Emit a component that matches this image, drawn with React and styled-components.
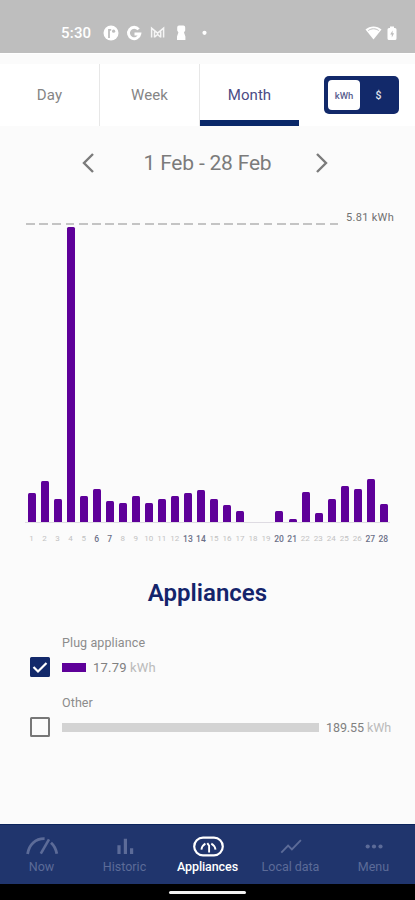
import React from 'react';
import styled, { createGlobalStyle } from 'styled-components';

const GlobalStyle = createGlobalStyle`
  *, *::before, *::after { box-sizing: border-box; }
  body { margin: 0; background: #fbfbfb; font-family: Roboto, "Noto Sans", sans-serif; }
`;

const Screen = styled.div`
  width: 415px;
  height: 900px;
  display: flex;
  flex-direction: column;
  overflow: hidden;
  background: #fbfbfb;
`;

const StatusBar = styled.header`
  flex: none;
  height: 53px;
  padding: 13px 18px 0 61px;
  display: flex;
  align-items: center;
  background: #bebebe;
  color: #fff;
`;

const Clock = styled.span`
  width: 42px;
  font-size: 15px;
  font-weight: 500;
  letter-spacing: 0.2px;
`;

const StatusIcons = styled.div`
  display: flex;
  align-items: center;
`;

const SystemIcons = styled(StatusIcons)`
  margin-left: auto;
  gap: 5px;
`;

const TopBar = styled.div`
  flex: none;
  height: 75px;
  padding-top: 10px;
  border-top: 1px solid #fff;
  display: flex;
`;

const Tabs = styled.nav`
  display: flex;
  width: 300px;
  height: 62px;
`;

const Tab = styled.button`
  display: flex;
  flex-direction: column;
  width: 100px;
  padding: 0;
  border: 0;
  border-right: 1px solid ${(p) => (p.$active ? '#fff' : '#e7e7e7')};
  background: #fff;
  color: ${(p) => (p.$active ? '#4b4b85' : '#858585')};
  font: 400 15px/62px Roboto, sans-serif;
  letter-spacing: ${(p) => p.$spacing || 0.05}px;
  text-align: center;
`;

const TabLabel = styled.span`
  width: 100%;
  height: 56px;
`;

const TabUnderline = styled.span`
  width: 100%;
  height: 6px;
  background: #0a2869;
`;

const SwitchArea = styled.div`
  flex: 1;
  height: 62px;
  padding-left: 24px;
  display: flex;
  align-items: center;
  background: #fff;
`;

const UnitSwitch = styled.div`
  width: 75px;
  height: 38px;
  padding: 4px;
  display: flex;
  border-radius: 5px;
  background: #12296a;
`;

const UnitOption = styled.span`
  width: ${(p) => (p.$active ? '32px' : '37px')};
  flex: none;
  height: 30px;
  display: flex;
  align-items: center;
  justify-content: center;
  border-radius: 4px;
  background: ${(p) => (p.$active ? '#fff' : 'transparent')};
  color: ${(p) => (p.$active ? '#5a618f' : '#e1e4ee')};
  font-size: ${(p) => (p.$active ? '9.5px' : '10.5px')};
  font-weight: 500;
`;

const Period = styled.div`
  flex: none;
  height: 70px;
  padding: 0 83px 0 78px;
  display: flex;
  align-items: center;
  justify-content: space-between;
  color: #7b7b7b;
`;

const PeriodLabel = styled.span`
  padding-left: 5px;
  font-size: 21px;
  letter-spacing: -0.2px;
  white-space: nowrap;
`;

const ArrowButton = styled.button`
  width: 20px;
  height: 24px;
  padding: 0;
  border: 0;
  background: none;
  color: #7b7b7b;
  display: grid;
  place-items: center;
`;

const Chart = styled.section`
  flex: none;
  height: 374px;
  padding: 13px 21px 0 25px;
`;

const MaxLine = styled.div`
  height: 15px;
  display: flex;
  justify-content: space-between;
`;

const Dashes = styled.div`
  flex: none;
  width: 313px;
  height: 2px;
  margin: 12px 0 0 0.5px;
  background: repeating-linear-gradient(90deg, #c4c4c4 0 8.7px, transparent 8.7px 13.2px);
`;

const MaxLabel = styled.span`
  font-size: 11px;
  line-height: 14px;
  letter-spacing: 0.3px;
  white-space: nowrap;
  color: #707070;
`;

const Plot = styled.div`
  width: 365px;
  height: 297px;
  display: grid;
  grid-template-columns: repeat(28, 1fr);
  align-items: end;
  border-bottom: 1px solid #dedbe2;
`;

const Bar = styled.div`
  width: 8px;
  margin-left: 2.8px;
  border-radius: 1.5px 1.5px 0 0;
  background: #5e0099;
`;

const DayLabels = styled.div`
  width: 365px;
  margin-top: 10px;
  display: grid;
  grid-template-columns: repeat(28, 13.035px);
`;

const DayLabel = styled.span`
  display: flex;
  justify-content: center;
  font-size: ${(p) => (p.$weekend ? 8.5 : 8)}px;
  line-height: 12px;
  font-weight: ${(p) => (p.$weekend ? 500 : 400)};
  color: ${(p) => (p.$weekend ? '#6c7088' : '#c2c2c2')};
`;

const Title = styled.h1`
  flex: none;
  height: 42px;
  margin: 0;
  text-align: center;
  color: #14246b;
  font-size: 24px;
  line-height: 42px;
  font-weight: 600;
`;

const ApplianceList = styled.section`
  flex: 1;
  padding: 20px 20px 0 30px;
`;

const Appliance = styled.div`
  height: 60px;
  display: grid;
  grid-template-columns: 32px 1fr;
  grid-template-rows: 17px 32px;
  align-items: center;
`;

const ApplianceName = styled.label`
  grid-column: 2;
  font-size: 12.5px;
  letter-spacing: 0.1px;
  color: #8c8c8c;
`;

const CheckBox = styled.span`
  width: 20px;
  height: 20px;
  display: grid;
  place-items: center;
  border: 2px solid ${(p) => (p.$checked ? '#12296a' : '#777')};
  border-radius: 1.5px;
  background: ${(p) => (p.$checked ? '#12296a' : 'transparent')};
`;

const Usage = styled.div`
  display: flex;
  align-items: center;
  gap: 7px;
`;

const UsageBar = styled.div`
  flex: none;
  width: ${(p) => p.$width}px;
  height: 9px;
  background: ${(p) => p.$color};
`;

const Amount = styled.span`
  font-size: ${(p) => (p.$compact ? 12.5 : 13)}px;
  letter-spacing: ${(p) => (p.$compact ? -0.08 : 0.2)}px;
  white-space: nowrap;
  color: #808080;
`;

const Unit = styled.span`
  color: #bababa;
`;

const BottomNav = styled.nav`
  flex: none;
  height: 60px;
  display: grid;
  grid-template-columns: repeat(5, 1fr);
  border-top: 1px solid #0c245c;
  background: #20356d;
`;

const NavItem = styled.button`
  padding: 8px 0 0;
  border: 0;
  background: none;
  display: flex;
  flex-direction: column;
  align-items: center;
  color: ${(p) => (p.$active ? '#fff' : '#5c6b98')};
  font: ${(p) => (p.$active ? 500 : 400)} 12.5px/16px Roboto, sans-serif;
  letter-spacing: ${(p) => p.$spacing}px;
  white-space: nowrap;
`;

const NavIcon = styled.svg`
  display: block;
  flex: none;
  width: 36px;
  height: 26px;
  fill: none;
  stroke: currentColor;
`;

const GestureBar = styled.footer`
  flex: none;
  height: 16px;
  padding-top: 7px;
  display: flex;
  justify-content: center;
  background: #000;
`;

const GestureHandle = styled.span`
  width: 77px;
  height: 3px;
  border-radius: 2px;
  background: #f2f2f2;
`;

const days = [
  29.5, 41.5, 23.5, 295, 26.5, 33, 21, 19, 26.5, 19, 23.5, 26.5, 29.5, 32,
  23.5, 17.5, 11, 0, 0, 11, 3.5, 30.5, 9.5, 23.5, 36.5, 33, 43.5, 18.5,
];
const weekends = [6, 7, 13, 14, 20, 21, 27, 28];

const navItems = [
  {
    label: 'Now',
    spacing: 0.1,
    icon: (
      <g strokeWidth="2.8">
        <path d="M3.6 20.5C5 11 11.5 5 20.6 5.2" />
        <path d="M16.8 20.2 25 5.8" strokeWidth="2.6" />
        <path d="M27 9.3C30 12 32 15.8 32.8 20.3" />
      </g>
    ),
  },
  {
    label: 'Historic',
    spacing: 0.03,
    icon: <path strokeWidth="3.2" d="M12 20.5v-8.7M18.4 20.5V5.3M24.6 20.5v-5.7" />,
  },
  {
    label: 'Appliances',
    spacing: -0.1,
    active: true,
    icon: (
      <>
        <rect x="4.2" y="4.2" width="28.6" height="17.6" rx="8.8" strokeWidth="2.2" />
        <path strokeWidth="1.9" d="M11.4 16.2c.4-2.6 1.7-4.7 4-6M17.3 9.6l1.8 2.6V19M21.3 10.2c2.4 1.3 3.8 3.4 4.2 6" />
      </>
    ),
  },
  {
    label: 'Local data',
    spacing: -0.03,
    icon: <path strokeWidth="1.9" d="m8.3 19.2 6.8-7 3.8 3.8 9-9.3" />,
  },
  {
    label: 'Menu',
    spacing: 0.05,
    icon: (
      <g fill="currentColor" stroke="none">
        <circle cx="11.7" cy="13" r="2.1" />
        <circle cx="18" cy="13" r="2.1" />
        <circle cx="24.5" cy="13" r="2.1" />
      </g>
    ),
  },
];

function Notifications() {
  return (
    <StatusIcons>
      <svg width="108" height="18" viewBox="103 24 108 18" fill="none" stroke="#fff">
        <circle cx="111" cy="33" r="7.5" fill="#fff" stroke="none" />
        <path stroke="#bebebe" strokeWidth="1.8" d="M109 38v-8.2h2.2" />
        <circle cx="113.6" cy="31.2" r="1.6" fill="#bebebe" stroke="none" />
        <path strokeWidth="2.9" d="M138.6 29.4a5.7 5.7 0 1 0 1.2 4.6h-5.3" />
        <path strokeWidth="1.5" opacity=".85" d="M151.6 37.5V28.2l6 5 6-5v9.3M154.5 37.5v-6M160.7 37.5v-6M154.5 37.2l3.1-2.7 3.1 2.7" />
        <path fill="#fff" stroke="none" d="M179 25.5h4.4q1.8 0 1.8 2v3l-1.2 2 1.4 4V40H177v-3.5l1.4-4-1.2-2v-3q0-2 1.8-2z" />
        <circle cx="204.5" cy="32.8" r="2.1" fill="#fff" stroke="none" />
      </svg>
    </StatusIcons>
  );
}

function Arrow({ path, label }) {
  return (
    <ArrowButton aria-label={label}>
      <svg width="20" height="24" fill="none" stroke="currentColor" strokeWidth="2.4">
        <path d={path} />
      </svg>
    </ArrowButton>
  );
}

export default function App() {
  return (
    <>
      <GlobalStyle />
      <Screen>
        <StatusBar>
          <Clock>5:30</Clock>
          <Notifications />
          <SystemIcons>
            <svg width="17" height="14" viewBox="0 0 17 14">
              <path fill="#fff" d="M.5 3.5C5-.5 12-.5 16.5 3.5L8.5 13.5z" />
              <path fill="none" stroke="#bebebe" strokeWidth="1" d="M3.3 4.5c3-2.3 7.4-2.3 10.4 0" />
            </svg>
            <svg width="10" height="15" viewBox="0 0 10 15">
              <path fill="#fff" d="M3 .5h4V2h1q1.5 0 1.5 1.5v9Q9.5 14 8 14H2Q.5 14 .5 12.5v-9Q.5 2 2 2h1z" />
              <path fill="#bebebe" d="m5.6 4.5-2.4 4h1.6v3l2.3-4.2H5.6z" />
            </svg>
          </SystemIcons>
        </StatusBar>

        <TopBar>
          <Tabs>
            <Tab $spacing={0.25}><TabLabel>Day</TabLabel></Tab>
            <Tab><TabLabel>Week</TabLabel></Tab>
            <Tab $active>
              <TabLabel>Month</TabLabel>
              <TabUnderline />
            </Tab>
          </Tabs>
          <SwitchArea>
            <UnitSwitch>
              <UnitOption $active>kWh</UnitOption>
              <UnitOption>$</UnitOption>
            </UnitSwitch>
          </SwitchArea>
        </TopBar>

        <Period>
          <Arrow label="Previous month" path="M15 3 6 12l9 9" />
          <PeriodLabel>1 Feb - 28 Feb</PeriodLabel>
          <Arrow label="Next month" path="m5 3 9 9-9 9" />
        </Period>

        <Chart>
          <MaxLine>
            <Dashes />
            <MaxLabel>5.81 kWh</MaxLabel>
          </MaxLine>
          <Plot>
            {days.map((height, i) => (
              <Bar key={i} style={{ height }} />
            ))}
          </Plot>
          <DayLabels>
            {days.map((_, i) => (
              <DayLabel key={i} $weekend={weekends.includes(i + 1)}>{i + 1}</DayLabel>
            ))}
          </DayLabels>
        </Chart>

        <Title>Appliances</Title>

        <ApplianceList>
          <Appliance>
            <ApplianceName>Plug appliance</ApplianceName>
            <CheckBox $checked>
              <svg width="16" height="16" fill="none" stroke="#fff" strokeWidth="2.2">
                <path d="m1.5 8 4.5 4.5L14.5 4" />
              </svg>
            </CheckBox>
            <Usage>
              <UsageBar $width={24} $color="#5e0099" />
              <Amount>17.79 <Unit>kWh</Unit></Amount>
            </Usage>
          </Appliance>
          <Appliance>
            <ApplianceName>Other</ApplianceName>
            <CheckBox />
            <Usage>
              <UsageBar $width={257} $color="#d3d3d3" />
              <Amount $compact>189.55 <Unit>kWh</Unit></Amount>
            </Usage>
          </Appliance>
        </ApplianceList>

        <BottomNav>
          {navItems.map(({ label, active, spacing, icon }) => (
            <NavItem key={label} $active={active} $spacing={spacing}>
              <NavIcon viewBox="0 0 36 25">{icon}</NavIcon>
              {label}
            </NavItem>
          ))}
        </BottomNav>
        <GestureBar>
          <GestureHandle />
        </GestureBar>
      </Screen>
    </>
  );
}
